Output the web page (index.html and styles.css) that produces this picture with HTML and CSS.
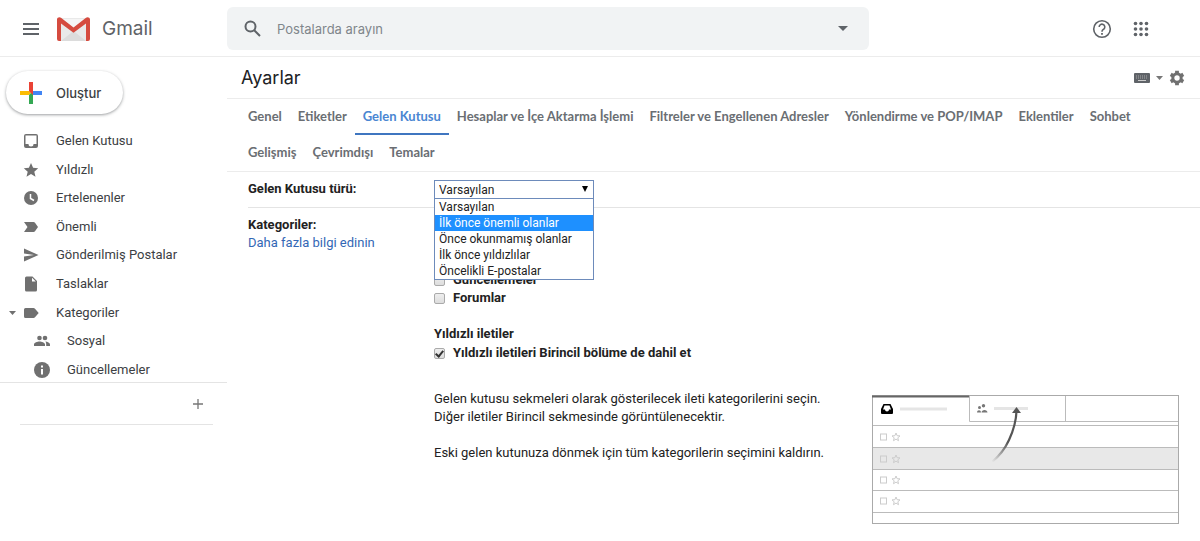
FILE: index.html
```html
<!DOCTYPE html>
<html lang="tr">
<head>
    <meta charset="UTF-8">
    <meta name="viewport" content="width=device-width, initial-scale=1.0">
    <title>Ayarlar - Gmail</title>
    <link rel="stylesheet" href="styles.css">
</head>
<body>
    <header class="topbar">
        <div class="brand">
            <button class="icon-button" type="button" aria-label="Ana menü">
                <svg width="18" height="12" viewBox="0 0 18 12"><path d="M1 1h16M1 6h16M1 11h16" stroke="#5f6368" stroke-width="2"/></svg>
            </button>
            <svg class="logo" width="33" height="24" viewBox="0 0 33 24">
                <path d="M3 1h27v23H3z" fill="#e9e9e9"/>
                <path d="M4 24l12.500-10L29 24z" fill="#dcdcdc"/>
                <path d="M4 2h25L16.500 12z" fill="#f5f5f5"/>
                <path d="M0 2.500C0 .5 2.500-.5 4 .8l12.500 9.700L29 .8c1.500-1.300 4-.3 4 1.700V22a2 2 0 0 1-2 2h-2V6.500l-12.500 9.300L4 6.500V24H2a2 2 0 0 1-2-2z" fill="#d54b3f"/>
            </svg>
            <span class="brand-name">Gmail</span>
        </div>
        <form class="search">
            <button class="icon-button" type="button" aria-label="Ara">
                <svg width="18" height="18" viewBox="0 0 18 18" fill="none" stroke="#5f6368" stroke-width="2"><circle cx="6.500" cy="6.500" r="5"/><path d="M10 10l6 6"/></svg>
            </button>
            <input type="text" placeholder="Postalarda arayın" aria-label="Postalarda arayın">
            <button class="icon-button" type="button" aria-label="Arama seçenekleri">
                <svg width="10" height="5" viewBox="0 0 10 5"><path d="M0 0h10L5 5z" fill="#5f6368"/></svg>
            </button>
        </form>
        <div class="top-actions">
            <button class="icon-button" type="button" aria-label="Yardım">
                <svg width="20" height="20" viewBox="0 0 20 20" fill="none" stroke="#5f6368">
                    <circle cx="10" cy="10" r="8.300" stroke-width="1.600"/>
                    <path d="M7.200 8a2.800 2.800 0 1 1 4.600 2.100C10.700 11 10 11.300 10 12.700" stroke-width="1.600"/>
                    <path d="M10 14v1.800" stroke-width="1.800"/>
                </svg>
            </button>
            <button class="icon-button" type="button" aria-label="Google uygulamaları">
                <svg width="16" height="16" viewBox="0 0 16 16" fill="#5f6368">
                    <circle cx="2.500" cy="2.500" r="1.800"/><circle cx="8" cy="2.500" r="1.800"/><circle cx="13.500" cy="2.500" r="1.800"/>
                    <circle cx="2.500" cy="8" r="1.800"/><circle cx="8" cy="8" r="1.800"/><circle cx="13.500" cy="8" r="1.800"/>
                    <circle cx="2.500" cy="13.500" r="1.800"/><circle cx="8" cy="13.500" r="1.800"/><circle cx="13.500" cy="13.500" r="1.800"/>
                </svg>
            </button>
        </div>
    </header>

    <div class="layout">
        <nav class="sidebar">
            <div class="folders">
                <button class="compose" type="button">
                    <svg width="22" height="22" viewBox="0 0 22 22">
                        <path d="M9 0h4v9l-2 2-2-2z" fill="#ea4335"/>
                        <path d="M9 13h4v9H9z" fill="#34a853"/>
                        <path d="M0 9h9l2 2-2 2H0z" fill="#fbbc04"/>
                        <path d="M13 9h9v4h-9z" fill="#4285f4"/>
                        <path d="M9 13l4-4v4z" fill="#34a853"/>
                        <path d="M9 9h4v4z" fill="#ea4335"/>
                    </svg>
                    Oluştur
                </button>
                <ul class="folder-list">
                    <li><a href="#">
                        <svg width="16" height="16" viewBox="0 0 16 16"><path fill-rule="evenodd" d="M3 1h10a2 2 0 0 1 2 2v10a2 2 0 0 1-2 2H3a2 2 0 0 1-2-2V3a2 2 0 0 1 2-2zm-.5 1.500v8.500H5.500a2.500 2.500 0 0 0 5 0h3V2.500z"/></svg>
                        Gelen Kutusu</a></li>
                    <li><a href="#">
                        <svg width="16" height="16" viewBox="0 0 16 16"><path d="M8 1l2.100 4.800 5.100.5-3.900 3.400 1.200 5.100L8 12.100l-4.500 2.700 1.200-5.100L.8 6.300l5.100-.5z"/></svg>
                        Yıldızlı</a></li>
                    <li><a href="#">
                        <svg width="16" height="16" viewBox="0 0 16 16"><circle cx="8" cy="8" r="7"/><path d="M7.500 4v4.500l3.500 2" fill="none" stroke="#fff" stroke-width="1.500"/></svg>
                        Ertelenenler</a></li>
                    <li><a href="#">
                        <svg width="16" height="16" viewBox="0 0 16 16"><path d="M1 3h9.500c.7 0 1.200.3 1.500.8L15 8l-3 4.200c-.3.500-.8.800-1.500.8H1l3.500-5z"/></svg>
                        Önemli</a></li>
                    <li><a href="#">
                        <svg width="16" height="16" viewBox="0 0 16 16"><path d="M1 14.500V9.500L11 8 1 6.500v-5L15.500 8z"/></svg>
                        Gönderilmiş Postalar</a></li>
                    <li><a href="#">
                        <svg width="16" height="16" viewBox="0 0 16 16"><path fill-rule="evenodd" d="M3.500.5h6L14 5v9a1.500 1.500 0 0 1-1.500 1.500h-9A1.500 1.500 0 0 1 2 14V2A1.500 1.500 0 0 1 3.500.500zM9 1.700V5.500h3.800z"/></svg>
                        Taslaklar</a></li>
                    <li><a class="expanded" href="#">
                        <svg class="caret" width="7" height="4" viewBox="0 0 7 4"><path d="M0 0h7L3.500 4z"/></svg>
                        <svg width="16" height="16" viewBox="0 0 16 16"><path d="M2.500 3h8c.6 0 1.100.2 1.500.7L15.700 8 12 12.300c-.4.500-.9.700-1.500.7h-8A1.500 1.500 0 0 1 1 11.500v-7A1.500 1.500 0 0 1 2.500 3z"/></svg>
                        Kategoriler</a></li>
                    <li><a class="sub" href="#">
                        <svg width="16" height="16" viewBox="0 0 16 16"><circle cx="5.500" cy="5" r="2.300"/><circle cx="11" cy="5" r="2.300"/><path d="M0 13v-1.500c0-2 3.500-3 5.500-3s5.500 1 5.500 3V13zM12.200 13h3.800v-1.500c0-1.700-2.600-2.700-4.600-3 .6.700.8 1.700.8 3z"/></svg>
                        Sosyal</a></li>
                    <li><a class="sub" href="#">
                        <svg width="16" height="16" viewBox="0 0 16 16"><circle cx="8" cy="8" r="8"/><path d="M7 7h2v5.500H7zM7 3.500h2v2H7z" fill="#fff"/></svg>
                        Güncellemeler</a></li>
                </ul>
            </div>
            <div class="chat">
                <button class="icon-button" type="button" aria-label="Yeni görüşme">
                    <svg width="12" height="12" viewBox="0 0 12 12"><path d="M6 1v10M1 6h10" stroke="#777" stroke-width="1.300"/></svg>
                </button>
            </div>
        </nav>

        <main class="content">
            <div class="title-row">
                <h1>Ayarlar</h1>
                <div class="tools">
                    <button class="icon-button" type="button" aria-label="Giriş aracı">
                        <svg width="16" height="10" viewBox="0 0 16 10"><rect width="16" height="10" rx="1" fill="#5f6368"/><path d="M2 3h12M2 5h12" stroke="#aaa" stroke-dasharray="1 1"/><path d="M4 7.500h8" stroke="#ccc"/></svg>
                    </button>
                    <button class="icon-button" type="button" aria-label="Giriş aracını seç">
                        <svg width="7" height="4" viewBox="0 0 7 4"><path d="M0 0h7L3.500 4z" fill="#777"/></svg>
                    </button>
                    <button class="icon-button" type="button" aria-label="Ayarlar">
                        <svg width="16" height="16" viewBox="0 0 16 16" fill="none" stroke="#707070"><circle cx="8" cy="8" r="4.200" stroke-width="3"/><path d="M8 .8v2.500M8 12.700v2.500M1.700 4.400l2.200 1.200M12.100 10.400l2.200 1.200M1.700 11.600l2.200-1.200M12.100 5.600l2.200-1.200" stroke-width="3.800"/></svg>
                    </button>
                </div>
            </div>

            <nav class="tabs">
                <a href="#">Genel</a>
                <a href="#">Etiketler</a>
                <a class="active" href="#">Gelen Kutusu</a>
                <a href="#">Hesaplar ve İçe Aktarma İşlemi</a>
                <a href="#">Filtreler ve Engellenen Adresler</a>
                <a href="#">Yönlendirme ve POP/IMAP</a>
                <a href="#">Eklentiler</a>
                <a href="#">Sohbet</a>
                <a href="#">Gelişmiş</a>
                <a href="#">Çevrimdışı</a>
                <a href="#">Temalar</a>
            </nav>

            <div class="settings">
                <div class="setting">
                    <label class="setting-name" for="inbox-type">Gelen Kutusu türü:</label>
                    <div class="dropdown">
                        <select id="inbox-type">
                            <option>Varsayılan</option>
                            <option>İlk önce önemli olanlar</option>
                            <option>Önce okunmamış olanlar</option>
                            <option>İlk önce yıldızlılar</option>
                            <option>Öncelikli E-postalar</option>
                        </select>
                        <svg class="arrow" width="6" height="6" viewBox="0 0 6 6"><path d="M0 0h6L3 6z"/></svg>
                        <ul class="options">
                            <li>Varsayılan</li>
                            <li class="selected">İlk önce önemli olanlar</li>
                            <li>Önce okunmamış olanlar</li>
                            <li>İlk önce yıldızlılar</li>
                            <li>Öncelikli E-postalar</li>
                        </ul>
                    </div>
                </div>
                <div class="setting">
                    <div class="setting-name">
                        Kategoriler:
                        <a href="#">Daha fazla bilgi edinin</a>
                    </div>
                    <div class="categories">
                        <label class="check"><input type="checkbox">Güncellemeler</label>
                        <label class="check"><input type="checkbox">Forumlar</label>
                        <h2>Yıldızlı iletiler</h2>
                        <label class="check"><input type="checkbox" checked>Yıldızlı iletileri Birincil bölüme de dahil et</label>
                        <div class="help">
                            <div class="help-text">
                                <p>Gelen kutusu sekmeleri olarak gösterilecek ileti kategorilerini seçin.<br>Diğer iletiler Birincil sekmesinde görüntülenecektir.</p>
                                <p>Eski gelen kutunuza dönmek için tüm kategorilerin seçimini kaldırın.</p>
                            </div>
                            <svg class="preview" width="307" height="130" viewBox="0 0 307 130">
                                <defs>
                                    <linearGradient id="fade" gradientUnits="userSpaceOnUse" x1="120" y1="67" x2="134" y2="46">
                                        <stop offset="0" stop-color="#555" stop-opacity="0"/>
                                        <stop offset="1" stop-color="#555"/>
                                    </linearGradient>
                                    <g id="mark" fill="none" stroke="#ccc">
                                        <rect x="8.500" y="-3" width="6" height="6"/>
                                        <path d="M24-4l1.100 2.700 2.900.2-2.200 1.900.7 2.900L24 2.100l-2.500 1.600.7-2.900L20-1.100l2.900-.2z"/>
                                    </g>
                                </defs>
                                <path d="M1 52h305v22H1z" fill="#e8e8e8"/>
                                <path d="M0 30.500h306M0 52.500h306M0 74.500h306M0 95.500h306M0 117.500h306M97.500 1v25.500h209M193.500 1v25" fill="none" stroke="#bbb"/>
                                <rect x=".5" y=".5" width="306" height="128" fill="none" stroke="#aaa"/>
                                <path d="M0 1.500h97" stroke="#666" stroke-width="2"/>
                                <path fill-rule="evenodd" d="M11.500 9h7l2.500 5v4a1 1 0 0 1-1 1H10a1 1 0 0 1-1-1v-4zM12.500 10.500L11 14.500h2a2 2 0 0 0 4 0h2l-1.500-4z" fill="#000"/>
                                <path d="M28 14h47M122 13.500h34" stroke="#e5e5e5" stroke-width="3"/>
                                <g fill="#777"><circle cx="107.500" cy="12.500" r="1.500"/><circle cx="111.500" cy="10.800" r="1.700"/><path d="M105 17.500c0-3 4-3 4 0zM109.500 17.500c0-3.500 6-3.500 6 0z"/></g>
                                <use href="#mark" y="42"/>
                                <use href="#mark" y="64"/>
                                <use href="#mark" y="85"/>
                                <use href="#mark" y="106"/>
                                <path d="M120 67q11-9 17-22 7-15 7.500-29" fill="none" stroke="url(#fade)" stroke-width="2.200"/>
                                <path d="M140 18l4.500-6 4.500 6z" fill="#555"/>
                            </svg>
                        </div>
                    </div>
                </div>
            </div>
        </main>
    </div>
</body>
</html>
```

FILE: styles.css
```css
* {
    box-sizing: border-box;
}
body {
    margin: 0;
    font-family: Roboto, "Liberation Sans", sans-serif;
    font-size: 13px;
    line-height: 18px;
    color: #222;
    background: #fff;
}
ul {
    margin: 0;
    padding: 0;
    list-style: none;
}
a {
    color: inherit;
    text-decoration: none;
}
svg {
    display: block;
    flex: none;
}
.icon-button {
    display: flex;
    padding: 0;
    border: none;
    background: none;
    cursor: pointer;
}

/* top bar */
.topbar {
    display: flex;
    align-items: center;
    height: 57px;
    padding-top: 1px;
    border-bottom: 1px solid #ececec;
}
.brand {
    display: flex;
    align-items: center;
    flex: none;
    width: 227px;
    padding-left: 22px;
}
.logo {
    margin: 0 12px 0 17px;
}
.brand-name {
    font-family: Inter, Roboto, sans-serif;
    font-size: 19px;
    line-height: 24px;
    color: #5f6368;
}
.search {
    display: flex;
    align-items: center;
    flex: 1;
    max-width: 642px;
    height: 43px;
    padding: 0 21px 0 17px;
    border-radius: 6px;
    background: #f1f3f4;
}
.search input {
    flex: 1;
    margin: 0 15px;
    padding: 0;
    border: none;
    outline: none;
    background: none;
    font-family: Inter, Roboto, sans-serif;
    font-size: 13px;
}
.search input::placeholder {
    color: #80868b;
    opacity: 1;
}
.top-actions {
    display: flex;
    align-items: center;
    gap: 21px;
    margin-left: auto;
    padding-right: 51px;
}

/* left menu */
.layout {
    display: flex;
}
.sidebar {
    flex: none;
    width: 227px;
}
.folders {
    padding: 14px 0 0 6px;
    border-bottom: 1px solid #e4e4e4;
}
.compose {
    display: flex;
    align-items: center;
    gap: 14px;
    height: 43px;
    padding: 0 22px 0 14px;
    border: none;
    border-radius: 22px;
    background: #fff;
    box-shadow: 0 1px 3px rgba(60, 64, 67, 0.5);
    font-family: Inter, Roboto, sans-serif;
    font-size: 13px;
    font-weight: 500;
    color: #3c4043;
    cursor: pointer;
}
.folder-list {
    display: grid;
    min-height: 257px;
    margin-top: 13px;
    margin-bottom: -2px;
    color: #3c4043;
}
.folder-list a {
    display: flex;
    align-items: center;
    gap: 17px;
    height: 100%;
    padding-left: 17px;
}
.folder-list svg {
    fill: #707070;
}
.folder-list .expanded {
    padding-left: 3px;
}
.folder-list .caret {
    margin-right: -10px;
}
.folder-list .sub {
    padding-left: 28px;
}
.chat {
    display: flex;
    align-items: center;
    justify-content: flex-end;
    height: 42px;
    margin: 0 14px 0 20px;
    padding-right: 9px;
    border-bottom: 1px solid #e4e4e4;
}

/* settings */
.content {
    flex: 1;
    min-width: 0;
}
.title-row {
    display: flex;
    align-items: center;
    justify-content: space-between;
    height: 42px;
    padding: 0 15px 0 14px;
    border-bottom: 1px solid #ececec;
}
h1 {
    margin: 0;
    font-family: Inter, Roboto, sans-serif;
    font-size: 18px;
    font-weight: 400;
    line-height: 24px;
    color: #202124;
}
.tools {
    display: flex;
    align-items: center;
    gap: 6px;
}
.tabs {
    display: flex;
    flex-wrap: wrap;
    padding: 0 40px 0 13px;
    border-bottom: 1px solid #ececec;
    font-family: Lato, Roboto, sans-serif;
    font-size: 13px;
    font-weight: 700;
    color: #6a6e73;
}
.tabs a {
    height: 36px;
    padding: 8px;
    border-bottom: 2px solid transparent;
}
.tabs .active {
    color: #4a86d2;
    border-bottom-color: #3f76c0;
}
.settings {
    padding-left: 21px;
}
.setting {
    display: flex;
}
.setting:first-child {
    padding: 8px 0;
    border-bottom: 1px solid #e4e4e4;
}
.setting:last-child {
    padding-top: 8px;
}
.setting-name {
    flex: none;
    width: 186px;
    font-weight: 700;
}
.setting-name a {
    display: block;
    font-weight: 400;
    color: #3367b5;
}
.dropdown {
    position: relative;
    width: 160px;
    font-size: 12px;
}
.dropdown select {
    display: block;
    appearance: none;
    width: 100%;
    height: 19px;
    padding: 0 4px;
    border: 1px solid #6d8bbb;
    border-radius: 0;
    outline: none;
    background: #fff;
    font: inherit;
    color: #222;
}
.arrow {
    position: absolute;
    top: 6px;
    right: 6px;
    pointer-events: none;
}
.options {
    position: absolute;
    top: 18px;
    left: 0;
    width: 100%;
    border: 1px solid #6d8bbb;
    background: #fff;
    line-height: 16px;
}
.options li {
    padding: 0 4px;
}
.options .selected {
    color: #fff;
    background: #1e90ff;
}
.categories {
    flex: 1;
    padding-top: 55px;
}
.check {
    display: flex;
    align-items: center;
    font-weight: 700;
}
.check input {
    appearance: none;
    display: grid;
    justify-content: center;
    width: 11px;
    height: 11px;
    margin: 0 8px 0 0;
    border: 1px solid #aaa;
    border-radius: 2px;
    background: linear-gradient(#eee, #ddd);
}
.check input:checked::after {
    content: "";
    box-sizing: border-box;
    width: 5px;
    height: 8px;
    border: solid #333;
    border-width: 0 2px 2px 0;
    transform: rotate(40deg);
}
h2 {
    margin: 18px 0 1px;
    font-size: 13px;
    font-weight: 700;
    line-height: 18px;
}
.help {
    display: flex;
    justify-content: space-between;
    margin-top: 28px;
    padding-right: 21px;
}
.help p {
    margin: 0 0 18px;
}
.preview {
    margin-top: 5px;
}
```
